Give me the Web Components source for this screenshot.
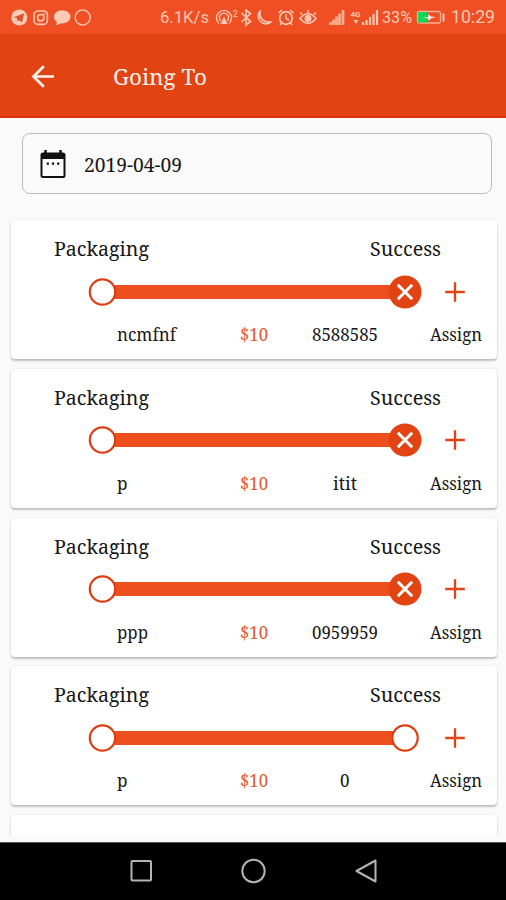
<!DOCTYPE html>
<html lang="en">
<head>
<meta charset="utf-8">
<title>Going To</title>
<style>
html,body{margin:0;height:100%;overflow:hidden;background:#fafafa}
body{font-family:"Noto Serif","Droid Serif","DejaVu Serif Condensed","DejaVu Serif",serif;color:#161616}
</style>
</head>
<body>
<going-to-screen></going-to-screen>
<script>
const define=(name,html,setup)=>customElements.define(name,class extends HTMLElement{
  connectedCallback(){
    if(this.shadowRoot)return;
    const t=document.createElement('template');
    t.innerHTML=typeof html==='function'?html(this):html;
    this.attachShadow({mode:'open'}).append(t.content.cloneNode(true));
    if(setup)setup(this);
  }
});

/* Single-line text condensed or expanded to an exact width. */
define('fit-text',e=>`<style>:host{display:block;width:${e.getAttribute('w')}px;white-space:nowrap;overflow:visible}
span{display:inline-block;transform-origin:0 50%}</style><span>${e.getAttribute('text')}</span>`,e=>{
  const s=e.shadowRoot.querySelector('span');
  const width=s.getBoundingClientRect().width;
  if(width)s.style.transform=`scaleX(${e.getAttribute('w')/width})`;
});

define('status-bar',`<style>
:host{display:flex;height:34px;box-sizing:border-box;background:#f04f24;color:#ffc9b4;font:17px/35px Roboto,sans-serif;align-items:center}
svg{display:block;flex:none;fill:none;stroke:currentColor}
.speed{margin-left:66px}.tray{margin-left:5px}.sig{margin-left:11px}.pct{margin-left:2px}.bat{margin-left:4px}.clock{margin-left:5px;font-size:18.500px}
</style>
<svg width="94" height="34" viewBox="0 0 94 34">
 <circle cx="19.3" cy="17.5" r="8" fill="currentColor" stroke="none"/><path d="M13.8 17.3 24.2 13.2 22 22.4 19 20.2 17.4 21.5 17.2 18.6Z" fill="#d9532f" stroke="none"/>
 <rect x="34" y="11" width="13.4" height="13.4" rx="4" stroke-width="1.6"/><circle cx="40.7" cy="17.7" r="3.2" stroke-width="1.6"/><circle cx="44.3" cy="14" r=".9" fill="currentColor" stroke="none"/>
 <path d="M62.2 10.2c4.700 0 8.300 2.900 8.300 6.600s-3.600 6.600-8.300 6.600l-1.500-.1c-1.200 1-3 1.800-4.800 1.800.6-.8 1-2 .8-3.300-1.700-1.200-2.800-2.900-2.800-5 0-3.700 3.600-6.600 8.300-6.600z" fill="currentColor" stroke="none"/>
 <circle cx="82.700" cy="17.500" r="7.500" stroke-width="1.500" stroke-dasharray="5.500 .4"/>
</svg>
<fit-text class="speed" w="49" text="6.1K/s"></fit-text>
<svg class="tray" width="104" height="34" viewBox="214 0 104 34" stroke-width="1.500">
 <path d="M219 23.500a7.500 7.500 0 1 1 10 0M220.800 21a4.600 4.600 0 1 1 6.400 0" stroke-width="1.400"/><path d="m224 16.500-3.500 7.500h7z" fill="currentColor" stroke="none"/>
 <text x="232.500" y="16.500" font-size="9.500" fill="currentColor" stroke="none">2</text>
 <path d="m241.500 13 9 8.500-4.500 3.500V10l4.500 3.500-9 8.500" stroke-width="1.700"/>
 <path d="M260.500 10.500a7.500 7.500 0 1 0 11 11A8.500 8.500 0 0 1 260.500 10.500Z" stroke-width="1.700"/>
 <circle cx="286" cy="18" r="6.300" stroke-width="1.700"/><path d="M286 14v4.500l3 1.500M278.500 13l3.500-3M293.500 13l-3.500-3M281.500 23l-1.500 2M290.500 23l1.500 2"/>
 <path d="M300 18.500q8-9.500 16 0-8 9.500-16 0Z" stroke-width="1.700"/><circle cx="308" cy="18.500" r="2.700" fill="currentColor"/><path d="M308 13v-3M302 14.500l-1.800-2M314 14.500l1.800-2"/>
</svg>
<svg class="sig" width="51" height="34" viewBox="329 0 51 34">
 <path d="M330.500 25v-3M333.500 25v-5.500M336.500 25v-8.500M339.500 25v-11.500M343 25V10" stroke-width="2.800" opacity=".75"/>
 <text x="350.500" y="16.500" font-size="8" font-weight="bold" fill="currentColor" stroke="none">4G</text><path d="m353.500 20 5 0-2.500 4z" fill="currentColor" stroke="none"/>
 <path d="M363 25v-3M366.500 25v-5M370 25v-8M373.500 25v-11M377 25V10" stroke-width="2.200"/>
</svg>
<fit-text class="pct" w="30" text="33%"></fit-text>
<svg class="bat" width="30" height="34" viewBox="416 0 30 34">
 <rect x="417.500" y="11.500" width="23" height="11.500" rx="2" stroke-width="1.300" opacity=".8"/><path d="M418 12h9v10.500h-9z" fill="#16d657" stroke="none"/><path d="M443.500 13.500v8" stroke-width="2"/><path d="M423 18l5-1v-3l3 2.500 5 .5-5 1.500-2.500 2.500-.5-2.500z" fill="#ffe9df" stroke="none"/>
</svg>
<fit-text class="clock" w="44" text="10:29"></fit-text>`);

define('app-bar',`<style>
:host{display:flex;height:84px;box-sizing:border-box;background:#e14313;border-bottom:2px solid #d9320b;color:#fff0ea;align-items:center;padding-left:30px;font-size:22.500px;line-height:30px}
svg{display:block;margin:1px 57px 0 0}::slotted(fit-text){margin-top:4px}
</style>
<svg width="26" height="26" viewBox="0 0 26 26" fill="none" stroke="#fff4ee" stroke-width="2.700"><path d="M24 13.500H3.500M13.800 3.200 3.500 13.500l10.300 10.300"/></svg>
<slot></slot>`);

define('date-field',`<style>
:host{display:flex;box-sizing:border-box;height:61px;margin:15px 14px 0 22px;border:1.500px solid #bcbcbc;border-radius:8px;align-items:center;padding-left:17px;font-size:20px;line-height:28px}
svg{display:block;margin-right:17.500px}::slotted(fit-text){margin-top:2px}
</style>
<svg width="26" height="30" viewBox="0 0 26 30"><path d="M3 3.500h20a2.500 2.500 0 0 1 2.500 2.500v20.500A2.500 2.500 0 0 1 23 29H3A2.500 2.500 0 0 1 .5 26.500V6A2.500 2.500 0 0 1 3 3.500ZM2.500 10v17h21V10Z" fill="#111" fill-rule="evenodd"/><path d="M5.500 1v5M20.500 1v5" stroke="#111" stroke-width="2.500"/><path d="M6.700 14.700h2.200M11.900 14.700h2.200M17.100 14.700h2.200" stroke="#111" stroke-width="2.200"/></svg>
<slot></slot>`);

define('track-line',e=>`<style>:host{display:block}svg{display:block}</style>
<svg width="338" height="40" viewBox="0 0 338 40">
<path d="M16 20H318" stroke="#ee4f1f" stroke-width="14"/>
<circle cx="16.500" cy="20" r="12.700" fill="#fff" stroke="#dc3e12" stroke-width="2.200"/>
${e.hasAttribute('open')?'<circle cx="319" cy="20" r="12.700" fill="#fff" stroke="#dc3e12" stroke-width="2.200"/>'
:'<circle cx="319" cy="20" r="16.500" fill="#e14313"/><path d="m311.800 12.800 14.400 14.400m0-14.400-14.400 14.400" stroke="#fff" stroke-width="3"/>'}
</svg>`);

define('order-card',e=>{
  const a=k=>e.getAttribute(k);
  return `<style>
:host{display:flex;flex-direction:column;box-sizing:border-box;flex:none;height:139px;padding-top:14px;background:#fff;border-radius:4px;box-shadow:0 2px 2px rgba(0,0,0,.22),0 0 2px rgba(0,0,0,.12)}
.head{display:flex;justify-content:space-between;height:29px;padding:0 56px 0 43px;font-size:20px;line-height:29px}
.mid{display:flex;align-items:center;height:57px;padding-left:75px}
.foot{display:grid;grid-template-columns:123px 54px 102px 1fr;height:29px;padding-left:106px;font-size:17.500px;line-height:29px}
.foot :nth-child(3){justify-self:center}.foot :nth-child(4){margin-left:34px}
.price{color:#e4592f}.plus{display:block;margin-left:20px}
</style>
${e.hasAttribute('blank')?'':`<div class="head"><fit-text w="95" text="Packaging"></fit-text><fit-text w="71" text="Success"></fit-text></div>
<div class="mid"><track-line ${e.hasAttribute('open')?'open':''}></track-line><svg class="plus" width="22" height="22" viewBox="0 0 22 22"><path d="M1.200 11h19.600M11 1.200v19.600" stroke="#e14313" stroke-width="2.300"/></svg></div>
<div class="foot"><fit-text w="${a('name-w')}" text="${a('name')}"></fit-text><fit-text class="price" w="28" text="$10"></fit-text><fit-text w="${a('code-w')}" text="${a('code')}"></fit-text><fit-text w="52" text="Assign"></fit-text></div>`}`;
});

define('nav-bar',`<style>
:host{display:flex;height:58px;background:#000;align-items:center;justify-content:center;box-sizing:border-box;border-top:1px solid #555}
svg{display:block;margin-bottom:2px}
</style><svg width="260" height="30" viewBox="0 0 260 30" fill="none" stroke="#b4b4b4" stroke-width="2"><rect x="8.500" y="5" width="19.500" height="19.500" rx="1"/><circle cx="130.500" cy="15" r="11.200"/><path d="M252.500 4.500v21L233.500 15Z" stroke-linejoin="round"/></svg>`);

define('going-to-screen',`<style>
:host{display:flex;flex-direction:column;width:506px;height:900px;background:#fafafa}
main{display:flex;flex-direction:column;flex:none;height:724px}
.list{display:flex;flex-direction:column;gap:9.700px;margin-top:20px;padding:6.200px 9px 0 11px;height:621px;overflow:hidden;box-sizing:border-box}
</style>
<status-bar></status-bar>
<app-bar><fit-text w="94" text="Going To"></fit-text></app-bar>
<main>
<date-field><fit-text w="98" text="2019-04-09"></fit-text></date-field>
<div class="list">
<order-card name="ncmfnf" name-w="59" code="8588585" code-w="66"></order-card>
<order-card name="p" name-w="10.500" code="itit" code-w="24"></order-card>
<order-card name="ppp" name-w="31" code="0959959" code-w="66"></order-card>
<order-card name="p" name-w="10.500" code="0" code-w="9.500" open></order-card>
<order-card blank></order-card>
</div>
</main>
<nav-bar></nav-bar>`);
</script>
</body>
</html>
